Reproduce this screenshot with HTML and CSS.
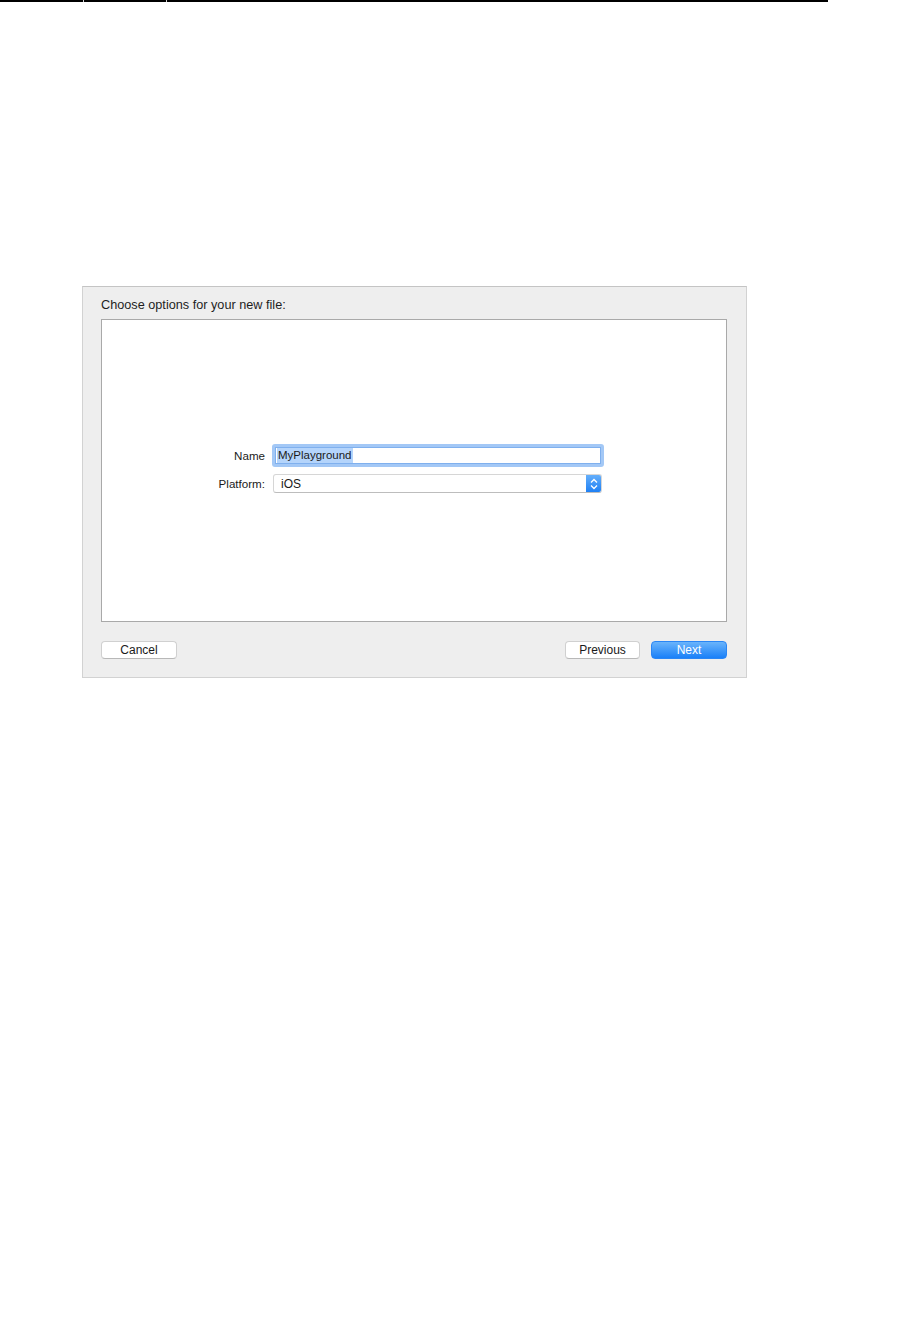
FILE: index.html
```html
<!DOCTYPE html>
<html>
<head>
<meta charset="utf-8">
<link rel="stylesheet" href="styles.css">
</head>
<body>
<div class="topline">
  <span class="seg seg1"></span><span class="tick"></span><span class="seg seg2"></span><span class="tick"></span><span class="seg seg3"></span>
</div>
<div class="dialog">
  <div class="title">Choose options for your new file:</div>
  <div class="panel">
    <div class="form">
      <label class="label">Name</label>
      <div class="field focus"><span class="sel">MyPlayground</span></div>
      <label class="label">Platform:</label>
      <div class="popup">
        <span class="popup-text">iOS</span>
        <span class="stepper">
          <svg width="16" height="18" viewBox="0 0 16 18"><path d="M5 7.5 L8 4.5 L11 7.5" fill="none" stroke="#fff" stroke-width="1.3"/><path d="M5 10.5 L8 13.5 L11 10.5" fill="none" stroke="#fff" stroke-width="1.3"/></svg>
        </span>
      </div>
    </div>
  </div>
  <div class="buttons">
    <button class="btn cancel">Cancel</button>
    <div class="right">
      <button class="btn prev">Previous</button>
      <button class="btn next">Next</button>
    </div>
  </div>
</div>
</body>
</html>
```
FILE: styles.css
```css
html, body {
  margin: 0;
  padding: 0;
  background: #ffffff;
}
body {
  font-family: "Liberation Sans", Arial, sans-serif;
  color: #1a1a1a;
}
.topline {
  display: flex;
  height: 2px;
  width: 828px;
}
.seg {
  display: block;
  height: 2px;
  background: #000;
}
.seg1 { width: 83px; }
.seg2 { width: 82px; }
.seg3 { flex: 1; }
.tick {
  display: block;
  width: 1px;
  height: 2px;
  background: #d4d4d4;
}
.dialog {
  box-sizing: border-box;
  margin: 284px 0 0 82px;
  width: 665px;
  height: 392px;
  background: #eeeeee;
  border: 1px solid #d2d2d2;
  border-top-color: #c4c4c4;
  padding: 10px 19px 18px 18px;
  display: flex;
  flex-direction: column;
}
.title {
  font-size: 12.7px;
  line-height: 16px;
  height: 16px;
  color: #1e1e1e;
  margin-bottom: 6px;
}
.panel {
  box-sizing: border-box;
  height: 303px;
  background: #fff;
  border: 1px solid #a9a9a9;
  padding-top: 124px;
}
.form {
  display: grid;
  grid-template-columns: 163px 332px;
  column-gap: 7px;
  row-gap: 7px;
  align-items: center;
}
.label {
  font-size: 11.6px;
  text-align: right;
  color: #1a1a1a;
}
.field {
  box-sizing: border-box;
  height: 23px;
  background: #fff;
  display: flex;
  align-items: center;
  font-size: 11.5px;
}
.field.focus {
  border: 3px solid #a3c8f6;
  border-radius: 3px;
  box-shadow: inset 0 0 0 1px #7fb0ee;
  padding-left: 2px;
}
.sel {
  background: #b4d4fb;
  line-height: 15px;
  padding: 0 1px;
}
.popup {
  box-sizing: border-box;
  width: 329px;
  margin-left: 1px;
  height: 19px;
  background: #fff;
  border: 1px solid #d6d6d6;
  border-bottom-color: #bdbdbd;
  border-radius: 3px;
  display: flex;
  align-items: center;
  justify-content: space-between;
  overflow: hidden;
}
.popup-text {
  font-size: 12px;
  padding-left: 7px;
}
.stepper {
  width: 16px;
  height: 19px;
  margin: -1px -1px -1px 0;
  background: linear-gradient(#68b1fb, #1b7ef4);
  border-radius: 0 3px 3px 0;
  display: flex;
  align-items: center;
  justify-content: center;
}
.buttons {
  margin-top: 19px;
  display: flex;
  justify-content: space-between;
}
.right {
  display: flex;
  gap: 11px;
}
.btn {
  box-sizing: border-box;
  width: 76px;
  height: 18px;
  font-family: "Liberation Sans", Arial, sans-serif;
  font-size: 12px;
  line-height: 16px;
  padding: 0;
  border-radius: 4px;
  background: #fff;
  border: 1px solid #d0d0d0;
  border-bottom-color: #b8b8b8;
  color: #1a1a1a;
}
.btn.cancel { width: 76px; }
.btn.prev { width: 75px; }
.btn.next {
  width: 76px;
  color: #fff;
  border-color: #2a86f5;
  background: linear-gradient(#6ab4fb, #1a80f8);
}
```
